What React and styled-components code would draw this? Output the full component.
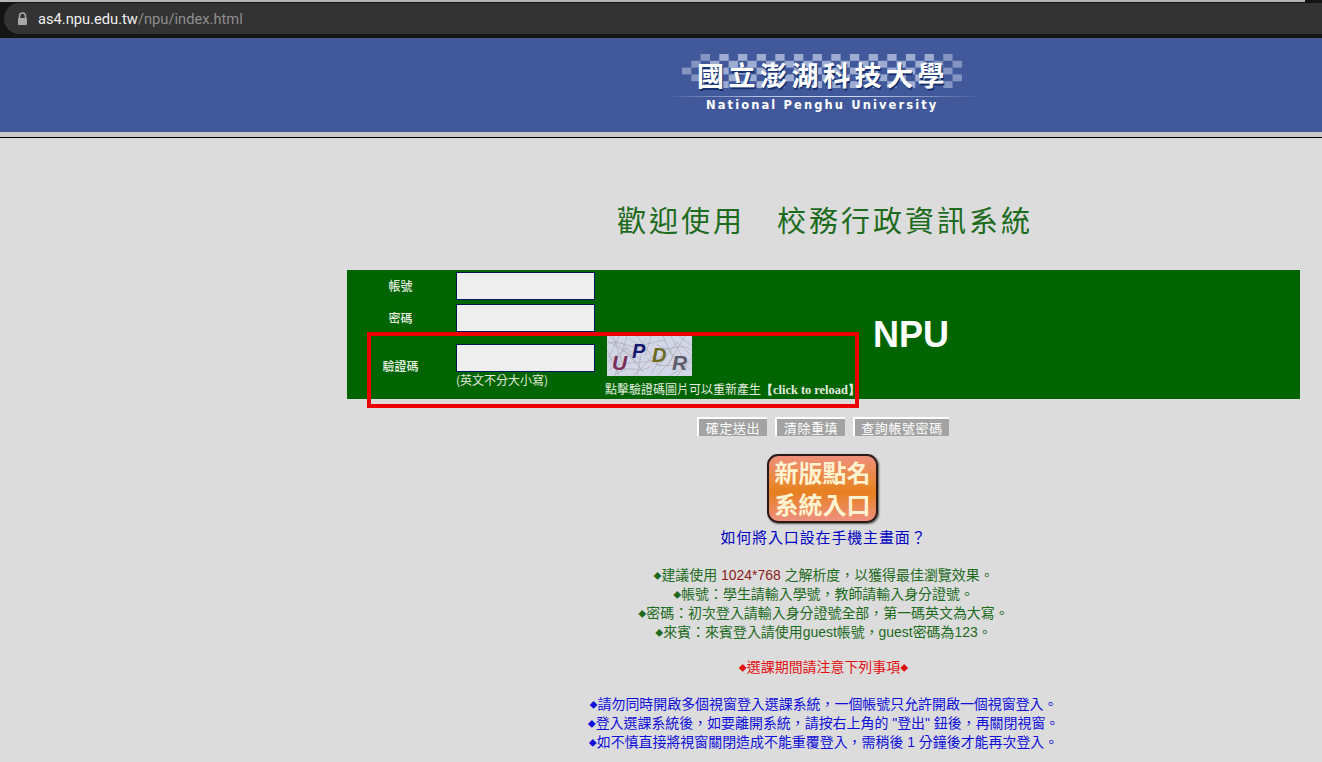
import React from 'react';
import styled, { createGlobalStyle } from 'styled-components';

const CJK = '"Noto Sans CJK TC", "Liberation Sans", sans-serif';
const LATIN_CJK = '"Liberation Sans", "Noto Sans CJK TC", sans-serif';

const Global = createGlobalStyle`
  html, body { margin: 0; padding: 0; height: 762px; overflow: hidden; background: #dcdcdc; }
  * { box-sizing: border-box; }
`;

const Page = styled.div`
  width: 1322px;
  height: 762px;
  overflow: hidden;
  background: #dcdcdc;
  font-family: ${LATIN_CJK};
`;

const BrowserBar = styled.div`
  height: 38px;
  background: #141414;
  display: flex;
  flex-direction: column;
`;

const TopEdge = styled.div`
  height: 2px;
  margin-right: 17px;
  background: #b4b4b4;
`;

const AddressRow = styled.div`
  height: 32px;
  padding: 1px 0 0 4px;
  display: flex;
`;

const AddressPill = styled.div`
  flex: 1;
  height: 31px;
  padding-left: 13px;
  display: flex;
  align-items: center;
  gap: 10px;
  border-radius: 15px 0 0 15px;
  background: #333333;
  font: 14.7px Roboto, sans-serif;
`;

const Host = styled.span`color: #f0f0f0;`;
const UrlPath = styled.span`color: #8e8e8e;`;

const Banner = styled.header`
  height: 94px;
  background: #41599b;
  border-top: 1px solid #4a5a88;
  display: flex;
  padding-left: 667px;
`;

const Logo = styled.div`
  width: 314px;
  position: relative;
  padding-top: 19px;
`;

const Checker = styled.svg`
  position: absolute;
  left: 15px;
  top: 15px;
`;

const LogoCn = styled.div`
  position: relative;
  height: 34px;
  padding-left: 30px;
  font: 700 27px/34px ${CJK};
  letter-spacing: 4.5px;
  color: #fff;
  white-space: nowrap;
  text-shadow: 1px 2px 0 #16306e;
`;

const LogoRule = styled.div`
  height: 1px;
  margin-top: 4px;
  background: linear-gradient(90deg, transparent, #b9c6e6 30%, #cfd8ee 60%, transparent);
`;

const LogoEn = styled.div`
  padding-left: 39px;
  margin-top: 1px;
  font: 700 11.5px/15px "DejaVu Sans", sans-serif;
  letter-spacing: 2.1px;
  color: #fff;
  white-space: nowrap;
`;

const Divider = styled.div`
  height: 6px;
  background: #c9c9c9;
  border-bottom: 1px solid #000;
`;

const Content = styled.main`
  width: 953px;
  margin-left: 347px;
  padding-top: 63px;
  position: relative;
  text-align: center;
`;

const Title = styled.h1`
  margin: 0;
  height: 36px;
  padding-left: 3px;
  font: 400 29px/36px ${CJK};
  letter-spacing: 3px;
  color: #1d6b1d;
  white-space: pre;
`;

const LoginPanel = styled.div`
  margin-top: 33px;
  height: 129px;
  background: #006400;
  display: grid;
  grid-template-columns: 109px 150px 267px 1fr;
  grid-template-rows: 34px 32px 1fr;
  text-align: left;
`;

const FieldLabel = styled.label`
  display: block;
  font: 500 12px/16px ${CJK};
  color: #e4ece0;
  text-align: center;
  padding-top: ${p => p.$top}px;
  padding-right: 2px;
`;

const TextInput = styled.input`
  display: block;
  width: 139px;
  height: 28px;
  margin-top: ${p => p.$top || 0}px;
  padding: 0;
  background: #eeeeee;
  border: 1px solid #001a55;
  outline: none;
`;

const Hint = styled.div`
  margin-top: 1px;
  font: 12px/14px ${CJK};
  color: #e2e8de;
`;

const CaptchaCell = styled.div`
  margin-left: -1px;
  white-space: nowrap;
`;

const CaptchaImage = styled.svg`
  display: block;
  margin-left: 2px;
`;

const CaptchaNote = styled.div`
  margin-top: 5px;
  font: 12px/16px ${CJK};
  color: #e4ece0;
  & b { font-family: "Liberation Serif", serif; font-size: 12.4px; }
`;

const BrandCell = styled.div`
  grid-column: 4;
  grid-row: 1 / span 3;
  padding-top: 43px;
  font: 700 36px/44px "Liberation Sans", sans-serif;
  color: #fff;
`;

const Highlight = styled.div`
  position: absolute;
  left: 20px;
  top: 194px;
  width: 492px;
  height: 76px;
  border: 4px solid #ee0000;
  pointer-events: none;
`;

const ButtonRow = styled.div`
  margin-top: 18px;
  display: flex;
  padding-left: 350px;
  gap: 8px;
`;

const GrayButton = styled.button`
  width: ${p => p.$w}px;
  height: 19px;
  padding: 1px 0 0;
  background: #a3a3a3;
  border: 0;
  border-top: 2px solid #fff;
  border-left: 2px solid #fff;
  color: #fff;
  font: 13px/16px ${CJK};
  letter-spacing: 0.6px;
  white-space: nowrap;
`;

const RollCallButton = styled.a`
  display: block;
  width: 111px;
  height: 69px;
  margin: 18px 0 0 420px;
  border: 2px solid #2a1a18;
  border-radius: 11px;
  background: linear-gradient(#ee8f7c 0%, #e8862f 45%, #e67f1e 55%, #ee9080 100%);
  box-shadow: 1px 1px 2px #555;
  color: #fff2d0;
  font: 700 24px/32px ${CJK};
  letter-spacing: 0;
  text-align: center;
`;

const HelpLink = styled.a`
  display: block;
  margin-top: 3px;
  font: 15px/22px ${CJK};
  letter-spacing: 0.85px;
  color: #0000c0;
`;

const Notes = styled.div`
  margin-top: ${p => p.$top}px;
  color: ${p => p.$color};
  font: 13.95px/19px ${LATIN_CJK};
`;

const NoteLine = styled.div`
  height: 19px;
  white-space: nowrap;
`;
const Accent = styled.span`color: #8b1a1a;`;
const Diamond = styled.span`
  font-size: 8px;
  line-height: 0;
  vertical-align: 1px;
`;

const LockIcon = () => (
  <svg width="11" height="14" viewBox="0 0 11 14">
    <path d="M2.5 6V4a3 3 0 0 1 6 0v2" fill="none" stroke="#a8a8a8" strokeWidth="1.6" />
    <rect x="1" y="6" width="9" height="7" rx="1" fill="#a8a8a8" />
  </svg>
);

const CheckerPattern = () => {
  const cells = [];
  for (let r = 0; r < 5; r += 1) {
    for (let c = 0; c < 30; c += 1) {
      if ((r + c) % 2 === 0) {
        const edge = Math.min(c, 29 - c);
        if (!(edge < 1 && (r === 0 || r === 4))) {
          cells.push(
            <rect key={`${r}-${c}`} x={c * 9.33} y={r * 6.8} width="9.33" height="6.8"
              fill="#d7def0" opacity={edge < 3 ? 0.45 : 0.62} />
          );
        }
      }
    }
  }
  return <Checker width="280" height="34" viewBox="0 0 280 34" aria-hidden="true">{cells}</Checker>;
};

const Captcha = () => (
  <CaptchaImage width="85" height="40" viewBox="0 0 85 40" aria-hidden="true">
    <rect width="85" height="40" fill="#d3d6e6" />
    <g stroke="#9c9ca2" strokeWidth="0.5" fill="none">
      <path d="M0 4 L24 20 L40 2 M6 0 L18 34 M14 6 L36 36 M30 0 L52 30 L70 6 L85 20 M44 38 L60 12 L80 34 M0 26 L20 12 L34 24 M56 0 L66 22 L50 40 M72 0 L85 10 M0 14 L12 40 M62 40 L85 26" />
      <path d="M2 34 C20 20 40 34 60 16 M22 2 C34 14 42 6 58 4 M40 22 C56 38 70 22 84 34 M0 8 C14 2 22 14 34 10 M10 38 C24 26 30 40 44 30 M50 8 C62 20 72 4 84 14" />
      <path d="M3 0 L28 26 M12 0 L2 22 M20 0 L8 40 M36 8 L30 40 M44 0 L38 20 M64 0 L78 26 M78 0 L60 30 M70 40 L84 22 M26 40 L48 18" />
    </g>
    <text x="5" y="34" fontFamily="Liberation Sans" fontStyle="italic" fontWeight="700" fontSize="21" fill="#7b2f58">U</text>
    <text x="25" y="22" fontFamily="Liberation Sans" fontStyle="italic" fontWeight="700" fontSize="20" fill="#161a70">P</text>
    <text x="45" y="26" fontFamily="Liberation Sans" fontStyle="italic" fontWeight="700" fontSize="20" fill="#6b6b1e">D</text>
    <text x="65" y="34" fontFamily="Liberation Sans" fontStyle="italic" fontWeight="700" fontSize="21" fill="#5c5c6c">R</text>
  </CaptchaImage>
);

const Note = ({ children }) => (
  <NoteLine><Diamond>◆</Diamond>{children}</NoteLine>
);

export default function App() {
  return (
    <Page>
      <Global />
      <BrowserBar>
        <TopEdge />
        <AddressRow>
          <AddressPill>
            <LockIcon />
            <span><Host>as4.npu.edu.tw</Host><UrlPath>/npu/index.html</UrlPath></span>
          </AddressPill>
        </AddressRow>
      </BrowserBar>
      <Banner>
        <Logo>
          <CheckerPattern />
          <LogoCn>國立澎湖科技大學</LogoCn>
          <LogoRule />
          <LogoEn>National Penghu University</LogoEn>
        </Logo>
      </Banner>
      <Divider />
      <Content>
        <Title>歡迎使用　校務行政資訊系統</Title>
        <LoginPanel>
          <FieldLabel $top={8}>帳號</FieldLabel>
          <div><TextInput $top={2} /></div>
          <div />
          <BrandCell>NPU</BrandCell>
          <FieldLabel $top={6}>密碼</FieldLabel>
          <div><TextInput type="password" /></div>
          <div />
          <FieldLabel $top={22}>驗證碼</FieldLabel>
          <div>
            <TextInput $top={8} />
            <Hint>(英文不分大小寫)</Hint>
          </div>
          <CaptchaCell>
            <Captcha />
            <CaptchaNote>點擊驗證碼圖片可以重新產生<b>【click to reload】</b></CaptchaNote>
          </CaptchaCell>
        </LoginPanel>
        <ButtonRow>
          <GrayButton $w={70}>確定送出</GrayButton>
          <GrayButton $w={70}>清除重填</GrayButton>
          <GrayButton $w={96}>查詢帳號密碼</GrayButton>
        </ButtonRow>
        <RollCallButton>新版點名<br />系統入口</RollCallButton>
        <HelpLink>如何將入口設在手機主畫面？</HelpLink>
        <Notes $top={18} $color="#1d6b1d">
          <Note>建議使用 <Accent>1024*768</Accent> 之解析度，以獲得最佳瀏覽效果。</Note>
          <Note>帳號：學生請輸入學號，教師請輸入身分證號。</Note>
          <Note>密碼：初次登入請輸入身分證號全部，第一碼英文為大寫。</Note>
          <Note>來賓：來賓登入請使用guest帳號，guest密碼為123。</Note>
        </Notes>
        <Notes $top={16} $color="#e01010">
          <NoteLine><Diamond>◆</Diamond>選課期間請注意下列事項<Diamond>◆</Diamond></NoteLine>
        </Notes>
        <Notes $top={18} $color="#1010d8">
          <Note>請勿同時開啟多個視窗登入選課系統，一個帳號只允許開啟一個視窗登入。</Note>
          <Note>登入選課系統後，如要離開系統，請按右上角的 "登出" 鈕後，再關閉視窗。</Note>
          <Note>如不慎直接將視窗關閉造成不能重覆登入，需稍後 1 分鐘後才能再次登入。</Note>
        </Notes>
        <Highlight />
      </Content>
    </Page>
  );
}
